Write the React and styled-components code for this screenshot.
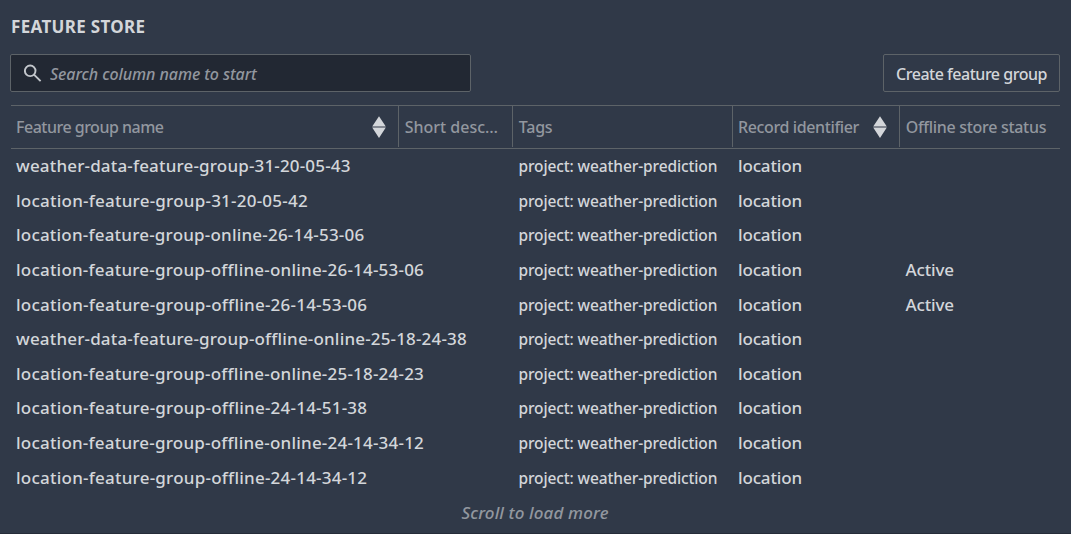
import React from "react";
import styled, { createGlobalStyle } from "styled-components";

const GlobalStyle = createGlobalStyle`
  *, *::before, *::after { box-sizing: border-box; }
  body {
    margin: 0;
    background: #303948;
    color: #d3d6da;
    font-family: "Noto Sans", "Open Sans", sans-serif;
    font-weight: 500;
  }
`;

const line = "#5d6368";
const muted = "#92979f";

const Page = styled.main`
  height: 534px;
  padding: 14px 11px 0;
  display: flex;
  flex-direction: column;
  overflow: hidden;
  border-bottom: 1px solid #252c39;
`;

const Title = styled.h1`
  margin: 0;
  padding-top: 1px;
  font-size: 17px;
  line-height: 23px;
  font-weight: 700;
  letter-spacing: 0.33px;
`;

const Toolbar = styled.div`
  display: flex;
  justify-content: space-between;
  height: 38px;
  margin: 16px 0 13px;
`;

const SearchBox = styled.label`
  display: flex;
  align-items: center;
  gap: 7px;
  width: 461px;
  padding-left: 13px;
  margin-left: -1px;
  background: #222833;
  border: 1px solid ${line};
  border-radius: 2px;
`;

const SearchInput = styled.input`
  flex: 1;
  padding: 1px 0 0;
  border: 0;
  outline: 0;
  background: transparent;
  font: italic 500 16px/24px "Noto Sans", sans-serif;
  letter-spacing: -0.08px;
  color: #d3d6da;
  &::placeholder { color: ${muted}; opacity: 1; }
`;

const CreateButton = styled.button`
  width: 177px;
  padding: 1px 0 0;
  border: 1px solid ${line};
  border-radius: 2px;
  background: transparent;
  color: #d3d6da;
  font: 500 16px/24px "Noto Sans", sans-serif;
  letter-spacing: -0.48px;
  white-space: nowrap;
`;

const Grid = styled.div`
  display: grid;
  grid-template-columns: 387px 114px 220px 167px 1fr;
`;

const HeaderRow = styled(Grid)`
  height: 44px;
  padding-bottom: 1px;
  border-top: 1px solid ${line};
  border-bottom: 1px solid ${line};
`;

const HeaderCell = styled.div`
  display: flex;
  align-items: center;
  justify-content: space-between;
  padding: 1px 12px 0 ${(p) => p.$indent || 5}px;
  border-left: ${(p) => (p.$first ? "0" : `1px solid ${line}`)};
  color: ${muted};
  font-size: 16px;
  letter-spacing: ${(p) => p.$tracking}px;
  white-space: nowrap;
`;

const Row = styled(Grid)`
  height: 34.65px;
  line-height: 34.65px;
  white-space: nowrap;
`;

const Cell = styled.div`
  padding-left: 6px;
  font-size: 17px;
  letter-spacing: -0.15px;
`;

const NameCell = styled(Cell)`
  padding-left: 5px;
  letter-spacing: ${(p) => p.$tracking}px;
`;

const TagCell = styled(Cell)`
  padding-left: 6.5px;
  font-size: 15.5px;
  letter-spacing: -0.12px;
`;

const StatusCell = styled(Cell)`
  padding-left: 6.5px;
`;

const More = styled.div`
  padding: 6px 1px 0 0;
  text-align: center;
  font-size: 17px;
  line-height: 24px;
  font-style: italic;
  letter-spacing: 0.12px;
  color: ${muted};
`;

const SearchIcon = () => (
  <svg width="19" height="19" viewBox="0 0 19 19" fill="none" stroke="#c3c7cc" strokeWidth="1.9">
    <circle cx="6.2" cy="6.8" r="5.3" />
    <path d="M10 10.6l6.6 6.6" />
  </svg>
);

const SortIcon = () => (
  <svg width="14" height="22" viewBox="0 0 14 22" fill="#d3d6da">
    <path d="M7 .3l6.8 10.2H.2zM7 21.9L.2 11.5h13.6z" />
  </svg>
);

const columns = [
  { label: "Feature group name", sort: true, tracking: -0.5 },
  { label: "Short desc…", tracking: 0, indent: 5.7 },
  { label: "Tags", tracking: -0.2, indent: 5.7 },
  { label: "Record identifier", sort: true, tracking: -0.38 },
  { label: "Offline store status", tracking: -0.3, indent: 5.7 },
];

const groups = [
  { name: "weather-data-feature-group-31-20-05-43", tracking: 0.17 },
  { name: "location-feature-group-31-20-05-42", tracking: 0.23 },
  { name: "location-feature-group-online-26-14-53-06", tracking: 0.2 },
  { name: "location-feature-group-offline-online-26-14-53-06", tracking: 0.21, status: "Active" },
  { name: "location-feature-group-offline-26-14-53-06", tracking: 0.23, status: "Active" },
  { name: "weather-data-feature-group-offline-online-25-18-24-38", tracking: 0.17 },
  { name: "location-feature-group-offline-online-25-18-24-23", tracking: 0.21 },
  { name: "location-feature-group-offline-24-14-51-38", tracking: 0.23 },
  { name: "location-feature-group-offline-online-24-14-34-12", tracking: 0.21 },
  { name: "location-feature-group-offline-24-14-34-12", tracking: 0.23 },
];

export default function App() {
  return (
    <>
      <GlobalStyle />
      <Page>
        <Title>FEATURE STORE</Title>
        <Toolbar>
          <SearchBox>
            <SearchIcon />
            <SearchInput placeholder="Search column name to start" />
          </SearchBox>
          <CreateButton>Create feature group</CreateButton>
        </Toolbar>
        <HeaderRow>
          {columns.map((c, i) => (
            <HeaderCell key={c.label} $first={i === 0} $indent={c.indent} $tracking={c.tracking}>
              {c.label}
              {c.sort && <SortIcon />}
            </HeaderCell>
          ))}
        </HeaderRow>
        {groups.map((g) => (
          <Row key={g.name}>
            <NameCell $tracking={g.tracking}>{g.name}</NameCell>
            <Cell />
            <TagCell>project: weather-prediction</TagCell>
            <Cell>location</Cell>
            <StatusCell>{g.status}</StatusCell>
          </Row>
        ))}
        <More>Scroll to load more</More>
      </Page>
    </>
  );
}
